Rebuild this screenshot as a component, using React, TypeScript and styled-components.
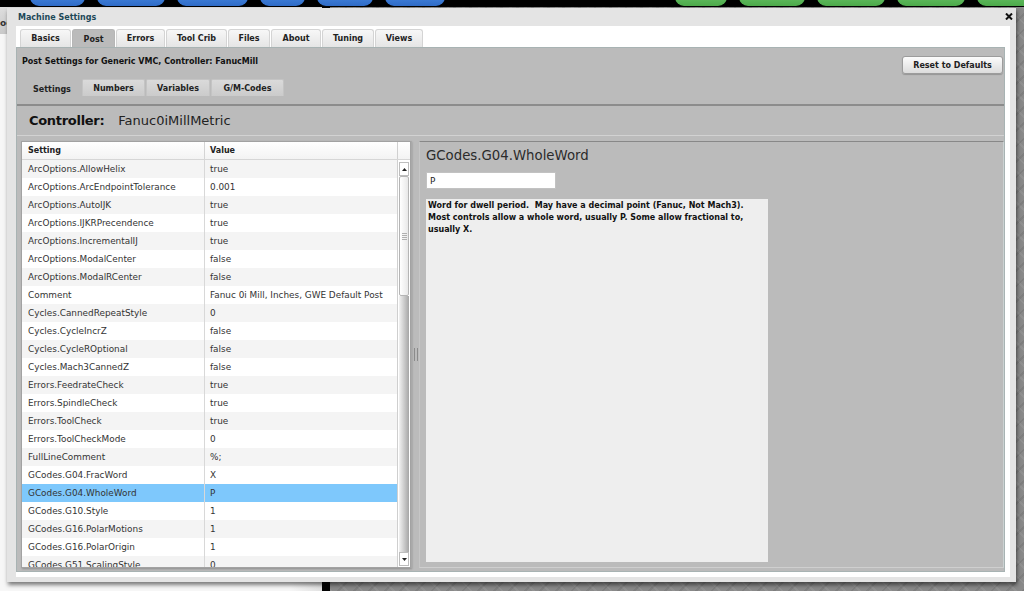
import React from "react";
import styled, { createGlobalStyle, css } from "styled-components";

const GlobalStyle = createGlobalStyle`
  html, body { margin: 0; padding: 0; background: #8d8d8d; }
  body { font-family: "DejaVu Sans", Verdana, sans-serif; overflow: hidden; }
  *, *::before, *::after { box-sizing: border-box; }
`;

const Screen = styled.div`
  position: relative;
  width: 1024px;
  height: 591px;
  overflow: hidden;
  display: flex;
  flex-direction: column;
  background: #8d8d8d;
`;

const TopBar = styled.div`
  height: 7px;
  flex: none;
  background: #000;
  display: flex;
  overflow: hidden;
`;

const PillGroup = styled.div<{ $offset: number }>`
  display: flex;
  gap: 12px;
  margin-left: ${(p) => p.$offset}px;
  flex: none;
`;

const Pill = styled.div<{ $w: number; $tone: "blue" | "green" }>`
  width: ${(p) => p.$w}px;
  height: 14px;
  margin-top: -8px;
  border-radius: 0 0 9px 9px;
  background: ${(p) =>
    p.$tone === "blue"
      ? "linear-gradient(#4a8ae0, #2f6cc8)"
      : "linear-gradient(#6cc46a, #4caa4a)"};
`;

const Backdrop = styled.div`
  flex: 1;
  display: flex;
  min-height: 0;
`;

const LeftPane = styled.div`
  width: 322px;
  flex: none;
  display: flex;
  flex-direction: column;
  background: linear-gradient(to right, #f7f7f7 90%, #e2e2e2);
`;

const LeftToolbar = styled.div`
  height: 27px;
  background: linear-gradient(#dedede, #c9c9c9);
  font-size: 9px;
  font-weight: bold;
  color: #333;
  display: flex;
  align-items: center;
  padding-top: 4px;
  overflow: hidden;
`;

const BlackDivider = styled.div`
  width: 8px;
  flex: none;
  background: #050505;
`;

const Canvas = styled.div`
  flex: 1;
  background-color: #8a8a8a;
  background-image: repeating-linear-gradient(
      45deg,
      rgba(255, 255, 255, 0.07) 0 2px,
      transparent 2px 11px
    ),
    repeating-linear-gradient(-45deg, rgba(0, 0, 0, 0.08) 0 2px, transparent 2px 11px);
`;

const Dialog = styled.section`
  position: absolute;
  left: 7px;
  top: 8px;
  width: 1009px;
  height: 574px;
  background: #e4e4e4;
  box-shadow: 1px 3px 4px rgba(0, 0, 0, 0.5);
  display: flex;
  flex-direction: column;
  padding: 0 6px 5px 9px;
`;

const TitleBar = styled.header`
  height: 18px;
  flex: none;
  display: flex;
  align-items: center;
  justify-content: space-between;
  padding-left: 2px;
  font-size: 8px;
  font-weight: bold;
  color: #1d4858;
`;

const CloseIcon = styled.svg`
  margin-right: -3px;
  margin-top: -1px;
`;

const Content = styled.div`
  flex: 1;
  min-height: 0;
  background: #fff;
  display: flex;
  flex-direction: column;
`;

const TabBar = styled.nav`
  height: 21px;
  flex: none;
  display: flex;
  align-items: flex-end;
  gap: 1px;
  padding-left: 4px;
`;

const Tab = styled.div<{ $w: number; $active?: boolean }>`
  width: ${(p) => p.$w}px;
  height: 18px;
  display: flex;
  align-items: center;
  justify-content: center;
  font-size: 8px;
  font-weight: bold;
  color: #222;
  border: 1px solid #d4d4d4;
  border-bottom: none;
  border-radius: 3px 3px 0 0;
  background: linear-gradient(#f7f7f7, #e5e5e5);
  ${(p) =>
    p.$active &&
    css`
      background: #bbbbbb;
      border-color: #b6b6b6;
      padding-top: 2px;
    `}
`;

const Panel = styled.div`
  flex: 1;
  min-height: 0;
  margin: 0 5px 5px 0;
  background: #bbbbbb;
  border: 1px solid #a8b3b3;
  display: flex;
  flex-direction: column;
`;

const PanelHeader = styled.div`
  height: 31px;
  flex: none;
  display: flex;
  justify-content: space-between;
  align-items: flex-start;
  padding: 7px 1px 0 5px;
`;

const Heading = styled.div`
  font-size: 8px;
  font-weight: bold;
  color: #111;
  line-height: 13px;
`;

const ResetButton = styled.button`
  margin-top: 1px;
  width: 101px;
  height: 18px;
  padding: 0;
  font-family: inherit;
  font-size: 8px;
  font-weight: bold;
  color: #222;
  border: 1px solid #9c9c9c;
  border-radius: 3px;
  background: linear-gradient(#fcfcfc, #dcdcdc);
  box-shadow: 0 1px 1px rgba(0, 0, 0, 0.2);
`;

const SubTabBar = styled.div`
  height: 17px;
  flex: none;
  display: flex;
  gap: 1px;
  padding-left: 6px;
`;

const SubTab = styled.div<{ $w: number; $active?: boolean }>`
  width: ${(p) => p.$w}px;
  display: flex;
  align-items: center;
  justify-content: center;
  font-size: 8px;
  font-weight: bold;
  color: #222;
  border: 1px solid #c4c4c4;
  border-bottom: none;
  border-radius: 2px 2px 0 0;
  background: linear-gradient(#dadada, #cbcbcb);
  ${(p) =>
    p.$active &&
    css`
      background: transparent;
      border-color: transparent;
      padding-top: 2px;
    `}
`;

const Rule = styled.div`
  margin-top: 8px;
  height: 2px;
  flex: none;
  background: #8c8c8c;
`;

const ControllerRow = styled.div`
  height: 30px;
  flex: none;
  display: flex;
  align-items: center;
  gap: 14px;
  padding-left: 12px;
  border-bottom: 1px solid #d2d2d2;
`;

const ControllerLabel = styled.span`
  font-size: 13px;
  font-weight: bold;
  letter-spacing: -0.3px;
  color: #111;
`;

const ControllerValue = styled.span`
  font-size: 13px;
  color: #222;
`;

const Main = styled.div`
  flex: 1;
  min-height: 0;
  display: flex;
  margin-top: 5px;
  padding: 0 0 3px 4px;
`;

const Grid = styled.div`
  width: 390px;
  flex: none;
  display: flex;
  flex-direction: column;
  background: #fff;
  border: 1px solid #a2a2a2;
  box-shadow: 1px 1px 2px rgba(0, 0, 0, 0.25);
`;

const GridHeader = styled.div`
  height: 18px;
  flex: none;
  display: flex;
  border-bottom: 1px solid #d6d6d6;
  background: linear-gradient(#fff, #f3f3f3);
`;

const HeadCell = styled.div<{ $w?: number; $divider?: boolean }>`
  ${(p) => (p.$w ? `width: ${p.$w}px; flex: none;` : "flex: 1;")}
  display: flex;
  align-items: center;
  padding-left: ${(p) => (p.$divider ? 6 : 5)}px;
  font-size: 8px;
  font-weight: bold;
  color: #222;
  ${(p) => p.$divider && "border-right: 1px solid #d4d4d4;"}
`;

const ScrollHead = styled.div`
  width: 13px;
  flex: none;
  border-left: 1px solid #d0d0d0;
`;

const GridBody = styled.div`
  flex: 1;
  min-height: 0;
  display: flex;
`;

const RowList = styled.div`
  flex: 1;
  min-width: 0;
  overflow: hidden;
`;

const Row = styled.div<{ $even: boolean; $selected: boolean }>`
  height: 18px;
  display: flex;
  background: ${(p) => (p.$selected ? "#7ec8fc" : p.$even ? "#f4f4f4" : "#ffffff")};
`;

const Cell = styled.div<{ $key?: boolean }>`
  ${(p) =>
    p.$key
      ? "width: 183px; flex: none; border-right: 1px solid #d8d8d8; padding-left: 6px;"
      : "flex: 1; padding-left: 5px;"}
  font-size: 8.9px;
  line-height: 18px;
  color: #333;
  white-space: nowrap;
  overflow: hidden;
`;

const Scrollbar = styled.div`
  width: 13px;
  flex: none;
  display: flex;
  flex-direction: column;
  border-left: 1px solid #cfcfcf;
  padding: 2px 1px 1px 1px;
`;

const ScrollButton = styled.div`
  height: 14px;
  flex: none;
  background: #fff;
  border: 1px solid #bdbdbd;
  display: flex;
  align-items: center;
  justify-content: center;
`;

const Thumb = styled.div`
  height: 120px;
  flex: none;
  background: linear-gradient(to right, #ffffff, #e8e8e8);
  border: 1px solid #b5b5b5;
  border-radius: 2px;
  display: flex;
  align-items: center;
  justify-content: center;
`;

const Track = styled.div`
  flex: 1;
  background: linear-gradient(to right, #f2f2f2 0%, #d0d0d0 45%, #a6a6a6 100%);
`;

const Splitter = styled.div`
  width: 8px;
  flex: none;
  display: flex;
  align-items: center;
  justify-content: center;
  border-left: 1px solid #a9a9a9;
`;

const SplitGrip = styled.div`
  width: 4px;
  height: 13px;
  border-left: 1px solid #8b8b8b;
  border-right: 1px solid #8b8b8b;
`;

const RightSection = styled.div`
  flex: 1;
  min-width: 0;
  display: flex;
  flex-direction: column;
  align-items: flex-start;
  border-top: 1px solid #888;
  border-left: 1px solid #c6c6c6;
  border-right: 1px solid #cbd2d2;
  border-bottom: 1px solid #cfcfcf;
  padding: 6px 6px 5px 6px;
`;

const DetailTitle = styled.h2`
  margin: 0;
  font-size: 13.3px;
  font-weight: normal;
  line-height: 16px;
  color: #2b2b2b;
`;

const ValueInput = styled.input`
  margin-top: 8px;
  width: 130px;
  height: 17px;
  border: 1px solid #c2c2c2;
  padding: 0 3px;
  font-family: inherit;
  font-size: 8.9px;
  color: #222;
  background: #fff;
  outline: none;
`;

const Description = styled.div`
  margin-top: 10px;
  width: 342px;
  flex: 1;
  background: #eeeeee;
  padding: 1px 2px;
  font-size: 8px;
  font-weight: bold;
  line-height: 12px;
  color: #111;
  white-space: pre-wrap;
`;

const settings: [string, string][] = [
  ["ArcOptions.AllowHelix", "true"],
  ["ArcOptions.ArcEndpointTolerance", "0.001"],
  ["ArcOptions.AutoIJK", "true"],
  ["ArcOptions.IJKRPrecendence", "true"],
  ["ArcOptions.IncrementalIJ", "true"],
  ["ArcOptions.ModalCenter", "false"],
  ["ArcOptions.ModalRCenter", "false"],
  ["Comment", "Fanuc 0i Mill, Inches, GWE Default Post"],
  ["Cycles.CannedRepeatStyle", "0"],
  ["Cycles.CycleIncrZ", "false"],
  ["Cycles.CycleROptional", "false"],
  ["Cycles.Mach3CannedZ", "false"],
  ["Errors.FeedrateCheck", "true"],
  ["Errors.SpindleCheck", "true"],
  ["Errors.ToolCheck", "true"],
  ["Errors.ToolCheckMode", "0"],
  ["FullLineComment", "%;"],
  ["GCodes.G04.FracWord", "X"],
  ["GCodes.G04.WholeWord", "P"],
  ["GCodes.G10.Style", "1"],
  ["GCodes.G16.PolarMotions", "1"],
  ["GCodes.G16.PolarOrigin", "1"],
  ["GCodes.G51.ScalingStyle", "0"],
];

const tabs: [string, number][] = [
  ["Basics", 51],
  ["Post", 43],
  ["Errors", 49],
  ["Tool Crib", 61],
  ["Files", 42],
  ["About", 50],
  ["Tuning", 52],
  ["Views", 48],
];

const subTabs: [string, number][] = [
  ["Settings", 58],
  ["Numbers", 63],
  ["Variables", 64],
  ["G/M-Codes", 73],
];

const bluePills = [55, 68, 71, 45, 56, 60];
const greenPills = [52, 66, 68, 68, 60];

const Arrow = ({ down }: { down?: boolean }) => (
  <svg width="5" height="3" viewBox="0 0 5 3">
    <polygon points={down ? "0,0 5,0 2.5,3" : "0,3 5,3 2.5,0"} fill="#222" />
  </svg>
);

const description =
  "Word for dwell period.  May have a decimal point (Fanuc, Not Mach3).\nMost controls allow a whole word, usually P. Some allow fractional to,\nusually X.";

export default function App() {
  const selected = "GCodes.G04.WholeWord";
  return (
    <>
      <GlobalStyle />
      <Screen>
        <TopBar>
          <PillGroup $offset={30}>
            {bluePills.map((w, i) => (
              <Pill key={i} $w={w} $tone="blue" />
            ))}
          </PillGroup>
          <PillGroup $offset={230}>
            {greenPills.map((w, i) => (
              <Pill key={i} $w={w} $tone="green" />
            ))}
          </PillGroup>
        </TopBar>
        <Backdrop>
          <LeftPane>
            <LeftToolbar>oc</LeftToolbar>
          </LeftPane>
          <BlackDivider />
          <Canvas />
        </Backdrop>

        <Dialog>
          <TitleBar>
            <span>Machine Settings</span>
            <CloseIcon width="8" height="7" viewBox="0 0 8 7">
              <path d="M1 0.5 L7 6.5 M7 0.5 L1 6.5" stroke="#111" strokeWidth="2" />
            </CloseIcon>
          </TitleBar>
          <Content>
            <TabBar>
              {tabs.map(([label, w]) => (
                <Tab key={label} $w={w} $active={label === "Post"}>
                  {label}
                </Tab>
              ))}
            </TabBar>
            <Panel>
              <PanelHeader>
                <Heading>Post Settings for Generic VMC, Controller: FanucMill</Heading>
                <ResetButton>Reset to Defaults</ResetButton>
              </PanelHeader>
              <SubTabBar>
                {subTabs.map(([label, w]) => (
                  <SubTab key={label} $w={w} $active={label === "Settings"}>
                    {label}
                  </SubTab>
                ))}
              </SubTabBar>
              <Rule />
              <ControllerRow>
                <ControllerLabel>Controller:</ControllerLabel>
                <ControllerValue>Fanuc0iMillMetric</ControllerValue>
              </ControllerRow>
              <Main>
                <Grid>
                  <GridHeader>
                    <HeadCell $w={183} $divider>
                      Setting
                    </HeadCell>
                    <HeadCell>Value</HeadCell>
                    <ScrollHead />
                  </GridHeader>
                  <GridBody>
                    <RowList>
                      {settings.map(([k, v], i) => (
                        <Row key={k} $even={i % 2 === 0} $selected={k === selected}>
                          <Cell $key>{k}</Cell>
                          <Cell>{v}</Cell>
                        </Row>
                      ))}
                    </RowList>
                    <Scrollbar>
                      <ScrollButton>
                        <Arrow />
                      </ScrollButton>
                      <Thumb>
                        <svg width="5" height="7" viewBox="0 0 5 7">
                          <path d="M0 0.5H5M0 2.5H5M0 4.5H5M0 6.5H5" stroke="#b0b0b0" strokeWidth="1" />
                        </svg>
                      </Thumb>
                      <Track />
                      <ScrollButton>
                        <Arrow down />
                      </ScrollButton>
                    </Scrollbar>
                  </GridBody>
                </Grid>
                <Splitter>
                  <SplitGrip />
                </Splitter>
                <RightSection>
                  <DetailTitle>GCodes.G04.WholeWord</DetailTitle>
                  <ValueInput readOnly value="P" />
                  <Description>{description}</Description>
                </RightSection>
              </Main>
            </Panel>
          </Content>
        </Dialog>
      </Screen>
    </>
  );
}
